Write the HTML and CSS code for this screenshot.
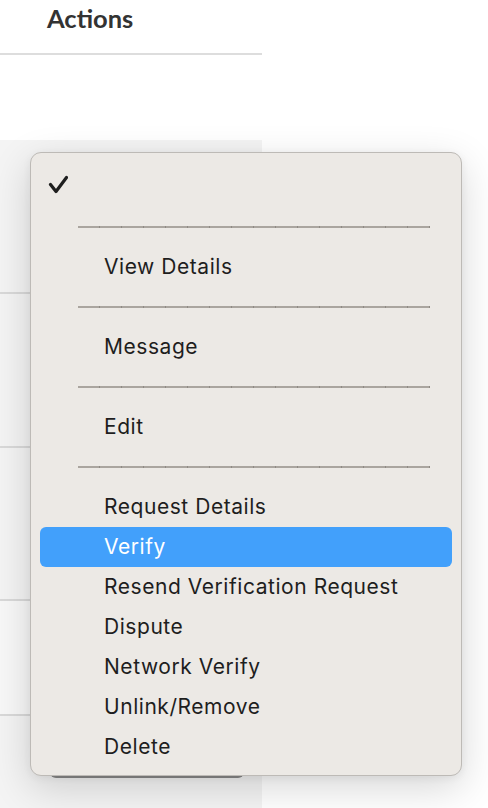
FILE: index.html
```html
<!DOCTYPE html>
<html>
<head>
<meta charset="utf-8">
<link rel="stylesheet" href="styles.css">
</head>
<body>
<div class="page">
  <div class="col">
    <div class="col-head">Actions</div>
    <div class="gap-row"></div>
    <div class="row r1"></div>
    <div class="row r2"></div>
    <div class="row r3"></div>
    <div class="row r4"></div>
    <div class="row r5"></div>
  </div>
  <div class="select-btn"></div>
  <ul class="menu">
    <li class="item checked"><span class="mark"><svg width="20" height="20" viewBox="0 0 20 20"><path d="M2.5 9.5 L8 16.5 L18.5 2.5" fill="none" stroke="#1e1e1e" stroke-width="3.2" stroke-linecap="round" stroke-linejoin="round"/></svg></span></li>
    <li class="item sep"><span class="rule"></span></li>
    <li class="item"><span class="mark"></span>View Details</li>
    <li class="item sep"><span class="rule"></span></li>
    <li class="item"><span class="mark"></span>Message</li>
    <li class="item sep"><span class="rule"></span></li>
    <li class="item"><span class="mark"></span>Edit</li>
    <li class="item sep"><span class="rule"></span></li>
    <li class="item"><span class="mark"></span>Request Details</li>
    <li class="item active"><span class="mark"></span>Verify</li>
    <li class="item"><span class="mark"></span>Resend Verification Request</li>
    <li class="item"><span class="mark"></span>Dispute</li>
    <li class="item"><span class="mark"></span>Network Verify</li>
    <li class="item"><span class="mark"></span>Unlink/Remove</li>
    <li class="item"><span class="mark"></span>Delete</li>
  </ul>
</div>
</body>
</html>
```

FILE: styles.css
```css
html, body {
  margin: 0;
  padding: 0;
  background: #ffffff;
}
.page {
  position: relative;
  width: 488px;
  height: 808px;
  overflow: hidden;
  background: #ffffff;
}
.col {
  width: 262px;
  display: flex;
  flex-direction: column;
}
.col-head {
  height: 55px;
  box-sizing: border-box;
  padding-left: 47px;
  padding-top: 2px;
  font-family: Lato, "Open Sans", sans-serif;
  font-weight: 700;
  font-size: 25.5px;
  line-height: 32px;
  color: #333333;
  border-bottom: 2px solid #dddddd;
  background: #ffffff;
}
.gap-row {
  height: 85px;
  background: #ffffff;
}
.row {
  box-sizing: border-box;
  background: #f4f4f4;
  border-bottom: 2px solid #d9d9d9;
}
.r1 { height: 154px; }
.r2 { height: 154px; }
.r3 { height: 153px; }
.r4 { height: 115px; background: #f8f8f8; }
.r5 { height: 100px; border-bottom: none; }
.select-btn {
  position: absolute;
  left: 50px;
  top: 738px;
  width: 194px;
  height: 40px;
  box-sizing: border-box;
  border-radius: 6px;
  background: #e4e4e4;
  border: 1px solid #9a9a9a;
  border-bottom: 2px solid #8a8a8a;
}
.menu {
  position: absolute;
  left: 30px;
  top: 152px;
  width: 432px;
  box-sizing: border-box;
  margin: 0;
  list-style: none;
  padding: 14px 9px 8px 9px;
  background: #ece9e5;
  border: 1px solid #bdbab6;
  border-radius: 11px;
  box-shadow: 0 12px 40px rgba(0, 0, 0, 0.16), 0 2px 8px rgba(0, 0, 0, 0.06);
  font-family: Inter, "Open Sans", sans-serif;
  font-size: 21px;
  color: #1e1e1e;
}
.item {
  height: 40px;
  box-sizing: border-box;
  padding-bottom: 2px;
  display: flex;
  align-items: center;
  border-radius: 6px;
  letter-spacing: 0.55px;
}
.mark {
  width: 64px;
  flex: none;
  display: flex;
  align-items: center;
}
.mark svg {
  margin-left: 8px;
  margin-top: -2px;
}
.item.active {
  background: #42a0fb;
  color: #ffffff;
}
.item.sep {
  padding-left: 38px;
  padding-right: 22px;
  padding-bottom: 0;
}
.rule {
  flex: 1;
  height: 2px;
  background-color: #aaa59f;
  background-image: repeating-linear-gradient(90deg, transparent 0, transparent 21px, #8f8a84 21px, #8f8a84 22px);
}
```
